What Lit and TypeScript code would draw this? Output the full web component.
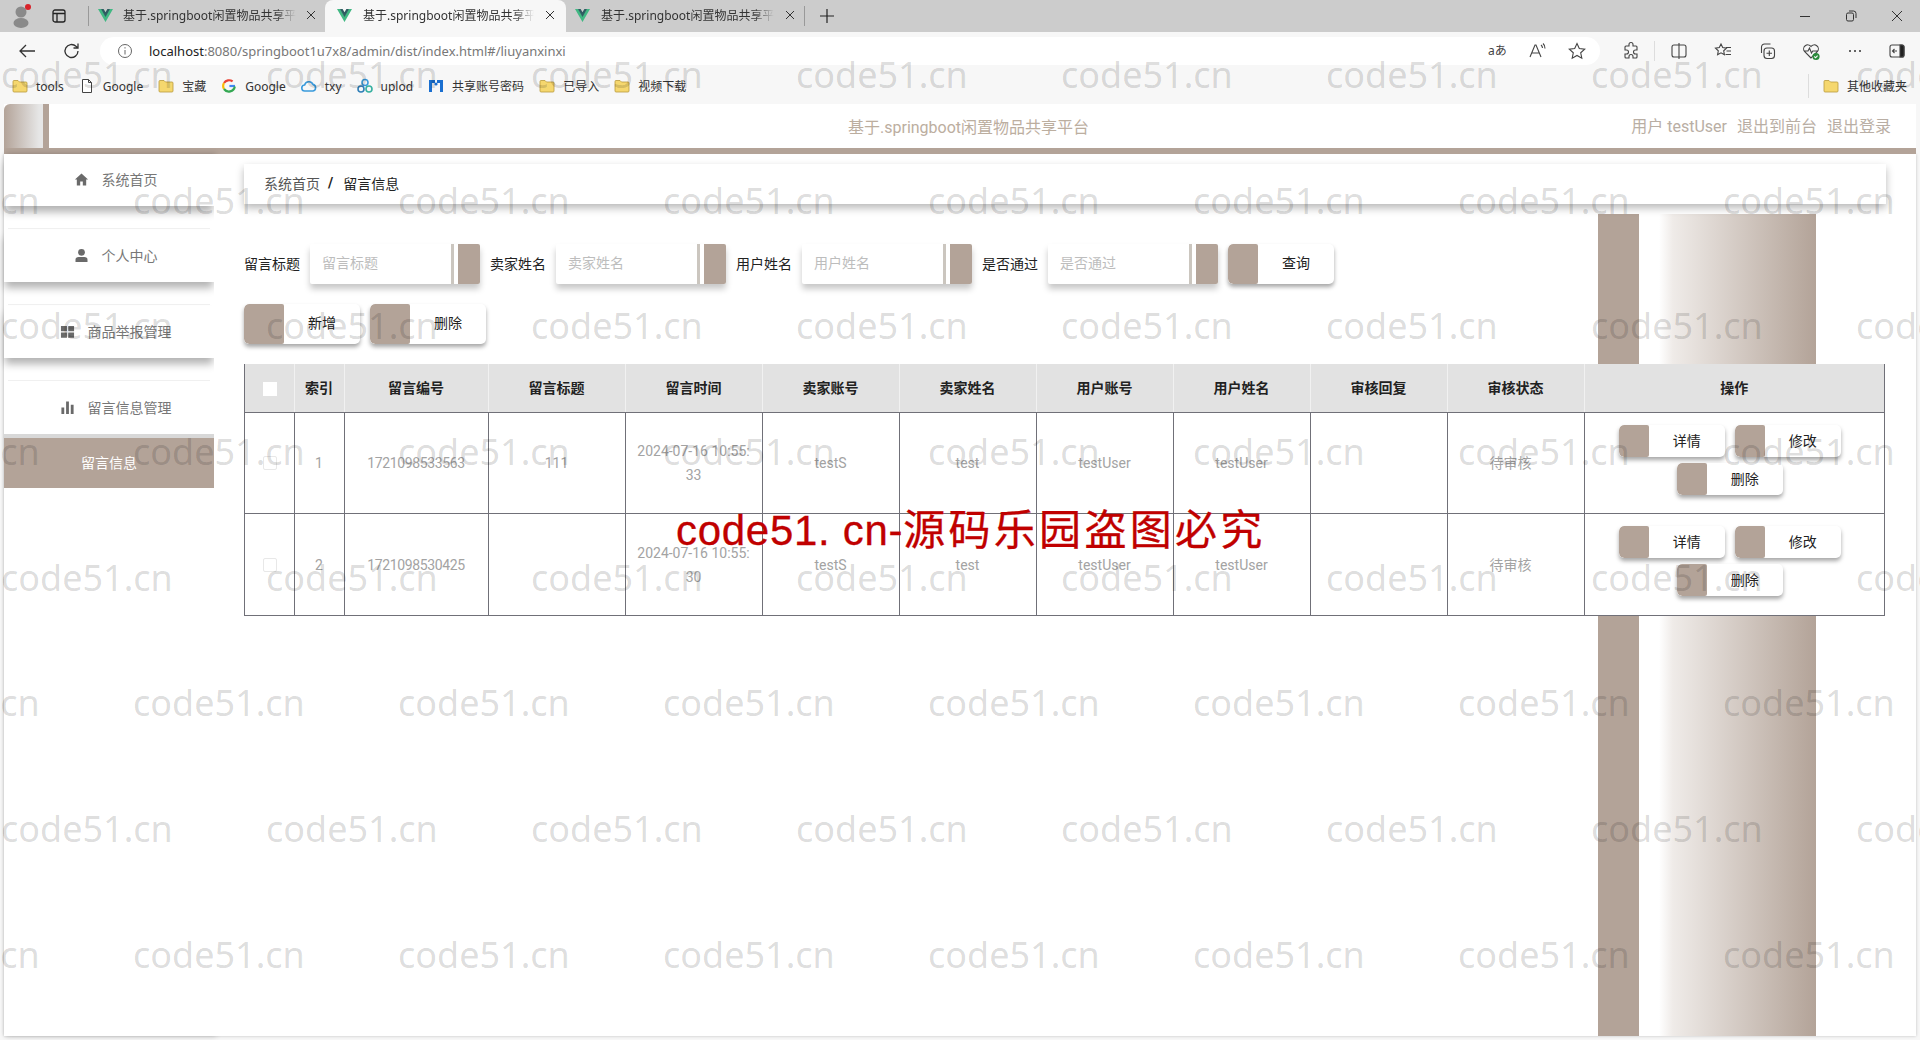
import { LitElement, html, css, svg } from "lit";
import { customElement } from "lit/decorators.js";

const vue = html`<svg class="fav" viewBox="0 0 16 16"><path fill="#41b883" d="M0 1h3.6L8 8.6 12.4 1H16L8 15z"/><path fill="#2f5d62" d="M3.2 1h2.8L8 4.6 10 1h2.8L8 9.6z"/></svg>`;
const folder = html`<svg class="bi" viewBox="0 0 16 16"><path fill="#f5d76e" stroke="#b99a3c" stroke-width=".8" d="M1 3.5q0-1 1-1h4l1.5 1.5H14q1 0 1 1V13q0 1-1 1H2q-1 0-1-1z"/></svg>`;
const doc = html`<svg class="bi" viewBox="0 0 16 16"><path fill="#fff" stroke="#444" d="M3.5 1.5h6l3 3v10h-9zM9.5 1.5v3h3"/></svg>`;
const gIcon = html`<svg class="bi" viewBox="0 0 16 16"><path fill="none" stroke="#4285f4" stroke-width="2.2" d="M14 8H8.4"/><path fill="none" stroke="#ea4335" stroke-width="2.2" d="M3 5a6 6 0 0 1 8.6-1.6"/><path fill="none" stroke="#fbbc05" stroke-width="2.2" d="M3 5a6 6 0 0 0 0 6"/><path fill="none" stroke="#34a853" stroke-width="2.2" d="M3 11a6 6 0 0 0 10.8-2.5"/></svg>`;
const cloud = html`<svg class="bi" viewBox="0 0 16 16"><path fill="none" stroke="#3a9bdc" stroke-width="1.6" d="M4 13a3 3 0 0 1-.4-6A4.5 4.5 0 0 1 12 6.4a3.4 3.4 0 0 1 0 6.6z"/></svg>`;
const cloud2 = html`<svg class="bi" viewBox="0 0 16 16"><circle cx="8" cy="4.5" r="3" fill="none" stroke="#3a9bdc" stroke-width="1.6"/><circle cx="4" cy="11" r="3" fill="none" stroke="#2f7fb8" stroke-width="1.6"/><circle cx="12" cy="11" r="3" fill="none" stroke="#36b0a0" stroke-width="1.6"/></svg>`;
const share = html`<svg class="bi" viewBox="0 0 16 16"><path fill="#1a6fd0" d="M1 2h6v3H4v9H1zM9 2h6v12h-3V5H9z"/><circle cx="8" cy="6" r="1.6" fill="#1a6fd0"/></svg>`;

const bookmarks = [
  [folder, "tools"], [doc, "Google"], [folder, "宝藏"], [gIcon, "Google"], [cloud, "txy"],
  [cloud2, "uplod"], [share, "共享账号密码"], [folder, "已导入"], [folder, "视频下载"],
] as const;

const head = ["索引", "留言编号", "留言标题", "留言时间", "卖家账号", "卖家姓名", "用户账号", "用户姓名", "审核回复", "审核状态", "操作"];
const rows = [
  ["1", "1721098533563", "111", "2024-07-16 10:55:33", "testS", "test", "testUser", "testUser", "", "待审核"],
  ["2", "1721098530425", "", "2024-07-16 10:55:30", "testS", "test", "testUser", "testUser", "", "待审核"],
];
const filters = ["留言标题", "卖家姓名", "用户姓名", "是否通过"];

const homeI = svg`<path d="M8 1.5 1 8h2v6.5h3.6V10h2.8v4.5H13V8h2z"/>`;
const userI = svg`<circle cx="8" cy="4.6" r="3.6"/><path d="M1.6 15v-2.6Q1.6 9.6 5 9.6h6q3.4 0 3.4 2.8V15z"/>`;
const gridI = svg`<path d="M1 2h6.4v5.6H1zM8.8 2H15v5.6H8.8zM1 9h6.4v5.6H1zM8.8 9H15v5.6H8.8z"/>`;
const barI = svg`<path d="M1.5 8h3v7h-3zM6.5 1.5h3V15h-3zM11.5 5h3v10h-3z"/>`;
const nav = [
  [homeI, "系统首页"], [userI, "个人中心"], [gridI, "商品举报管理"], [barI, "留言信息管理"],
] as const;

@customElement("app-root")
export class AppRoot extends LitElement {
  static styles = css`
    :host { display: block; width: 1920px; height: 1040px; position: relative; overflow: hidden; background: #f7f7f7;
      font-family: Roboto, "Noto Sans CJK SC", sans-serif; font-size: 14px; }
    * { box-sizing: border-box; }
    svg { display: block; flex: none; }

    .tabs { height: 32px; background: #cccccc; display: flex; align-items: stretch; font: 12px "Noto Sans", "Noto Sans CJK SC", sans-serif; color: #333; }
    .profile { width: 44px; flex: none; display: flex; align-items: center; justify-content: center; }
    .ws { width: 44px; flex: none; display: flex; align-items: center; justify-content: center; padding-right: 14px; padding-left: 0; }
    .sep { width: 1px; height: 20px; background: #999; align-self: center; flex: none; }
    .tabgap { width: 8px; flex: none; }
    .tab { flex: none; display: flex; align-items: center; gap: 10px; position: relative; padding-bottom: 2px; }
    .tab.first { width: 228px; padding-right: 8px; gap: 9px; }
    .tab.on { background: #f7f7f7; border-radius: 8px 8px 0 0; width: 241px; padding-left: 11px; padding-right: 10px; }
    .tab.last { width: 238px; padding-left: 8px; padding-right: 8px; }
    .tab .fav { width: 17px; height: 15px; }
    .title { flex: 1; white-space: nowrap; overflow: hidden; -webkit-mask-image: linear-gradient(to right, #000 88%, transparent); mask-image: linear-gradient(to right, #000 88%, transparent); }
    .x { width: 12px; height: 12px; flex: none; }
    .plus { width: 44px; flex: none; display: flex; align-items: center; justify-content: center; }
    .spacer { flex: 1; }
    .win { width: 46px; flex: none; display: flex; align-items: center; justify-content: center; }

    .bar { height: 38px; background: #f7f7f7; display: flex; align-items: center; }
    .nb { width: 45px; flex: none; display: flex; justify-content: center; }
    .navgroup { display: flex; padding-left: 4px; width: 100px; flex: none; }
    .url { width: 1500px; height: 28px; flex: none; background: #fff; border-radius: 14px; display: flex; align-items: center; padding: 0 3px 0 17px; font: 13px "Noto Sans", sans-serif; color: #777; }
    .url .dark { color: #222; }
    .url .addr { margin-left: 16px; flex: 1; white-space: nowrap; }
    .ti { width: 40px; flex: none; display: flex; justify-content: center; }
    .tools { display: flex; align-items: center; flex: 1; padding-left: 11px; justify-content: flex-start; }
    .ti.s { width: 44px; }
    .vs { width: 1px; height: 20px; background: #ddd; flex: none; margin: 0 2px 0 3px; }

    .books { height: 34px; background: #f7f7f7; display: flex; align-items: center; padding: 0 0 2px 12px; gap: 15px; font: 12px "Noto Sans", "Noto Sans CJK SC", sans-serif; color: #333; }
    .bk { display: flex; align-items: center; gap: 8px; white-space: nowrap; }
    .bi { width: 16px; height: 16px; }
    .other { margin-left: auto; padding: 0 13px 0 14px; border-left: 1px solid #ddd; height: 24px; }

    .app { height: 936px; display: flex; flex-direction: column; }
    .hdr { height: 50px; margin: 0 4px; flex: none; background: #fff; border-bottom: 6px solid #b3a398; display: flex; align-items: center; position: relative; font-size: 16px; color: #b9aea4; }
    .logo { height: 44px; flex: none; background: linear-gradient(to right, #b3a398, #e6e6e6 90%); border-right: 6px solid #b3a398; border-radius: 6px 0 0 0; box-sizing: content-box; width: 39px; }
    .brand { position: absolute; left: 844px; top: 10px; color: #bcae9f; }
    .who { margin-left: auto; display: flex; gap: 10px; padding: 0 25px 2px 0; }

    .body { flex: 1; display: flex; min-height: 0; margin: 0 4px 4px; background: #fff; box-shadow: 0 0 3px rgba(0,0,0,.22); }
    .side { width: 210px; flex: none; background: #fff; box-shadow: 2px 0 6px rgba(0,0,0,.2); color: #777; position: relative; }
    .mi { height: 52px; background: #fff; display: flex; align-items: center; justify-content: center; gap: 13px; padding: 0 0 2px 13px; box-shadow: 0 7px 8px -1px rgba(0,0,0,.3); position: relative; }
    .mi svg { width: 15px; height: 15px; fill: #6a6a6a; }
    .mi.last { box-shadow: none; }
    .div { height: 24px; padding-top: 22px; padding-left: 4px; padding-right: 4px; }
    .div::after { content: ""; display: block; height: 1px; background: #f0f0f0; }
    .sub { height: 54px; background: #b3a398; color: #fff; display: flex; align-items: center; justify-content: center; border-top: 4px solid #d8d8d8; padding-bottom: 2px; }
    .main { flex: 1; padding: 10px 30px; position: relative; min-width: 0;
      background-color: #fff;
      background-image: linear-gradient(to right, #b3a398 0, #b3a398 41px, #fff 41px, #fff 61px, #efebe8 75px, #b3a398 218px);
      background-size: 218px 100%; background-position: 1384px 60px; background-repeat: no-repeat; }
    .crumb { height: 40px; width: 1642px; background: #fff; box-shadow: 0 4px 8px rgba(0,0,0,.28); display: flex; align-items: center; padding: 0 0 2px 20px; color: #555; }
    .crumb i { font-style: normal; margin: 0 10px 0 8px; color: #222; font-weight: 700; }
    .crumb b { font-weight: 400; color: #222; }

    .form { display: flex; align-items: center; margin-top: 40px; height: 40px; }
    .lab { width: 56px; color: #222; margin: 0 10px 2px 0; white-space: nowrap; flex: none; }
    .sel { width: 170px; height: 40px; display: flex; flex: none; margin-right: 10px; box-shadow: 0 5px 6px rgba(0,0,0,.22); background: #fff; border-radius: 2px; }
    .sel span { flex: 1; padding-left: 12px; line-height: 38px; color: #bdbdbd; }
    .sel u { width: 3px; background: #cbc6bf; }
    .sel em { width: 4px; background: #fff; }
    .sel s { width: 22px; background: #b3a398; border-radius: 0 2px 2px 0; }

    .btn { display: inline-flex; height: 40px; background: #fff; border-radius: 5px; box-shadow: 0 3px 4px rgba(0,0,0,.35); color: #222; flex: none; overflow: hidden; }
    .btn::before { content: ""; background: #b3a398; width: 40px; flex: none; border-radius: 5px 2px 2px 5px; }
    .btn span { flex: 1; text-align: center; line-height: 38px; }
    .btn.big { width: 116px; }
    .btn.q { width: 106px; }
    .btn.q::before { width: 30px; }
    .btn.a { width: 106px; height: 32px; }
    .btn.a::before { width: 30px; }
    .btn.a span { line-height: 32px; }
    .acts { display: flex; gap: 10px; margin-top: 20px; height: 40px; }

    .table { margin-top: 20px; width: 1641px; border-bottom: 1px solid #707078; border-left: 1px solid #707078; border-right: 1px solid #707078; }
    .row { display: grid; grid-template-columns: 49.5px 50px 144px repeat(8, 137px) 1fr; }
    .row.h { height: 49px; background: #e2e2e2; font-weight: 700; color: #222; border-bottom: 1px solid #707078; }
    .row.h > div { border-right: 1px solid #f1f1f1; display: flex; align-items: center; justify-content: center; padding-bottom: 2px; }
    .row.h > div:first-child { padding: 2px 0 0 2px; }
    .row.h > div:last-child { border-right: 0; }
    .row.b { height: 101px; background: #fff; color: #a3a3a3; border-bottom: 1px solid #707078; }
    .row.b:last-child { border-bottom: 0; }
    .row.b > div { border-right: 1px solid #707078; display: flex; align-items: center; justify-content: center; text-align: center; line-height: 24px; }
    .row.b > div:first-child { padding-left: 2px; }
    .row.b > div:last-child { border-right: 0; }
    .row.b > div.state { padding-right: 10px; }
    .tight { letter-spacing: -.38px; }
    .row.b > div.date { padding: 0 10px; word-break: break-all; }
    .cb { width: 14px; height: 14px; background: #fff; border: 1px solid #e8e8e8; border-radius: 2px; }
    .h .cb { border: 0; border-radius: 0; }
    .row.b > div.ops { flex-wrap: wrap; align-content: flex-start; gap: 6px 10px; padding: 12px 9px 0 0; }

    .marks { position: absolute; inset: 0; pointer-events: none; padding-top: 12px; display: flex; flex-direction: column; font: 36px "Noto Sans", sans-serif; color: rgba(0,0,0,.15); line-height: 126px; z-index: 5; overflow: hidden; }
    .mrow { height: 125.7px; display: flex; flex: none; }
    .mrow.odd { margin-left: -133px; }
    .mrow span { width: 265px; flex: none; padding-left: 1px; }
    .stamp { position: absolute; left: 676px; top: 506px; height: 50px; display: flex; align-items: center; color: #c00000; font: 42px/50px "Liberation Sans", "Noto Sans CJK SC", sans-serif; z-index: 6; white-space: nowrap; pointer-events: none; -webkit-text-stroke: .3px #c00000; }
    .stamp .l { letter-spacing: .7px; }
    .stamp .c { letter-spacing: 3.3px; }
  `;

  private tab(cls: string) {
    return html`<div class="tab ${cls}">${vue}<div class="title">基于.springboot闲置物品共享平台</div>
      <svg class="x" viewBox="0 0 12 12"><path stroke="#333" d="M2 2l8 8M10 2l-8 8"/></svg></div>`;
  }

  private tool(c: unknown, cls = "") {
    return html`<div class="ti ${cls}"><svg width="20" height="20" viewBox="0 0 20 20" fill="none" stroke="#444" stroke-width="1.1">${c}</svg></div>`;
  }

  render() {
    return html`
      <div class="tabs">
        <div class="profile"><svg width="24" height="28" viewBox="0 0 24 28"><circle cx="11" cy="10" r="5.5" fill="#8a8a8a"/><ellipse cx="11" cy="21" rx="7.5" ry="5" fill="#8a8a8a"/><circle cx="18" cy="5" r="3" fill="#d8232a"/></svg></div>
        <div class="ws"><svg width="16" height="16" viewBox="0 0 16 16" fill="none" stroke="#222" stroke-width="1.3"><rect x="2" y="2" width="12" height="12" rx="2"/><path d="M2 5.5h12M6 5.5V14" /></svg></div>
        <div class="sep"></div>
        <div class="tabgap"></div>
        ${this.tab("first")}${this.tab("on")}${this.tab("last")}
        <div class="sep"></div>
        <div class="plus"><svg width="14" height="14" viewBox="0 0 14 14"><path stroke="#222" stroke-width="1.2" d="M7 0v14M0 7h14"/></svg></div>
        <div class="spacer"></div>
        <div class="win"><svg width="12" height="12" viewBox="0 0 12 12"><path stroke="#333" d="M1 6.5h10"/></svg></div>
        <div class="win"><svg width="12" height="12" viewBox="0 0 12 12" fill="none" stroke="#333"><rect x="1.5" y="3" width="7" height="8" rx="1.5"/><path d="M4 1h4.5Q11 1 11 3.5V8"/></svg></div>
        <div class="win"><svg width="12" height="12" viewBox="0 0 12 12"><path stroke="#333" d="M1 1l10 10M11 1L1 11"/></svg></div>
      </div>
      <div class="bar">
        <div class="navgroup">
          <div class="nb"><svg width="18" height="18" viewBox="0 0 18 18" fill="none" stroke="#333" stroke-width="1.3"><path d="M17 9H2M8 3L2 9l6 6"/></svg></div>
          <div class="nb"><svg width="18" height="18" viewBox="0 0 18 18" fill="none" stroke="#333" stroke-width="1.3"><path d="M15 9a6.5 6.5 0 1 1-2-4.7L15 6M15 1.5V6h-4.5"/></svg></div>
        </div>
        <div class="url">
          <svg width="16" height="16" viewBox="0 0 16 16" fill="none" stroke="#666"><circle cx="8" cy="8" r="6.5"/><path d="M8 7v4.5M8 4.2v1.3"/></svg>
          <div class="addr"><span class="dark">localhost</span>:8080/springboot1u7x8/admin/dist/index.html#/liuyanxinxi</div>
          ${this.toolsInUrl()}
        </div>
        <div class="tools">
          ${this.tool(svg`<path d="M8 3.5a2 2 0 0 1 4 0V5h3a1 1 0 0 1 1 1v3h-1.5a2 2 0 0 0 0 4H16v3a1 1 0 0 1-1 1h-3v-1.5a2 2 0 0 0-4 0V17H5a1 1 0 0 1-1-1v-3h1.5a2 2 0 0 0 0-4H4V6a1 1 0 0 1 1-1h3z"/>`)}
          <div class="vs"></div>
          ${this.tool(svg`<rect x="3" y="4" width="14" height="12" rx="2"/><path d="M10 2v16"/>`, "s")}
          ${this.tool(svg`<path d="M8 3l1.7 3.6 3.8.5-2.8 2.7.7 3.9L8 11.8l-3.4 1.9.7-3.9L2.5 7.1l3.8-.5zM13 6.5h5M13.5 10H18M12.5 13.5H18"/>`, "s")}
          ${this.tool(svg`<rect x="7" y="7" width="10.5" height="10.5" rx="3"/><path d="M12.3 9.5v5.5M9.5 12.3H15M4.5 12V6a3 3 0 0 1 3-3h6"/>`, "s")}
          ${this.tool(svg`<path d="M10 17 3.5 10.5a4 4 0 0 1 6.5-5 4 4 0 0 1 6.5 5zM3 10h4l1.5-3 2 5 1.2-2H17"/><circle cx="15" cy="15.5" r="3.6" fill="#2a8a3a" stroke="none"/><path stroke="#fff" d="M13.3 15.5l1.3 1.3 2-2.2"/>`, "s")}
          ${this.tool(svg`<circle cx="5" cy="10" r="1" fill="#333" stroke="none"/><circle cx="10" cy="10" r="1" fill="#333" stroke="none"/><circle cx="15" cy="10" r="1" fill="#333" stroke="none"/>`, "s")}
          ${this.tool(svg`<rect x="3" y="4" width="14" height="12" rx="2"/><path d="M13 4h2a2 2 0 0 1 2 2v8a2 2 0 0 1-2 2h-2z" fill="#222"/><path d="M10 10H5.5M7.5 8l-2 2 2 2"/>`)}
        </div>
      </div>
      <div class="books">
        ${bookmarks.map(([i, t]) => html`<div class="bk">${i}<span>${t}</span></div>`)}
        <div class="bk other">${folder}<span>其他收藏夹</span></div>
      </div>
      <div class="app">
        <div class="hdr">
          <div class="logo"></div>
          <div class="brand">基于.springboot闲置物品共享平台</div>
          <div class="who"><span>用户 testUser</span><span>退出到前台</span><span>退出登录</span></div>
        </div>
        <div class="body">
          <aside class="side">
            ${nav.map(([i, t], n) => html`
              ${n ? html`<div class="div"></div>` : ""}
              <div class="mi ${n === 3 ? "last" : ""}"><svg viewBox="0 0 16 16">${i}</svg><span>${t}</span></div>`)}
            <div class="sub">留言信息</div>
          </aside>
          <main class="main">
            <div class="crumb"><span>系统首页</span><i>/</i><b>留言信息</b></div>
            <div class="form">
              ${filters.map((f) => html`<div class="lab">${f}</div>
                <div class="sel"><span>${f}</span><u></u><em></em><s></s></div>`)}
              <div class="btn q"><span>查询</span></div>
            </div>
            <div class="acts">
              <div class="btn big"><span>新增</span></div>
              <div class="btn big"><span>删除</span></div>
            </div>
            <div class="table">
              <div class="row h"><div><div class="cb"></div></div>${head.map((h) => html`<div>${h}</div>`)}</div>
              ${rows.map((r) => html`<div class="row b">
                <div><div class="cb"></div></div>
                ${r.map((c, i) => html`<div class="${i === 1 ? "tight" : i === 3 ? "date" : i === 9 ? "state" : ""}">${c}</div>`)}
                <div class="ops">
                  <div class="btn a"><span>详情</span></div>
                  <div class="btn a"><span>修改</span></div>
                  <div class="btn a"><span>删除</span></div>
                </div>
              </div>`)}
            </div>
          </main>
        </div>
      </div>
      <div class="marks">
        ${[0, 1, 2, 3, 4, 5, 6, 7].map((r) => html`<div class="mrow ${r % 2 ? "odd" : ""}">
          ${Array.from({ length: 9 }, () => html`<span>code51.cn</span>`)}
        </div>`)}
      </div>
      <div class="stamp"><span class="l">code51. cn-</span><span class="c">源码乐园盗图必究</span></div>
    `;
  }

  private toolsInUrl() {
    return html`
      ${this.tool(svg`<text x="1" y="14" font-size="12" fill="#444" stroke="none" font-family="Noto Sans, Noto Sans CJK JP">aあ</text>`)}
      ${this.tool(svg`<path d="M3 16 8 4h1l5 12M5 12h7M14 4a4 4 0 0 1 1.5 3M16 2.5a6 6 0 0 1 2 5"/>`)}
      ${this.tool(svg`<path d="M10 2.5l2.3 5 5.4.6-4 3.7 1.1 5.4L10 14.4l-4.8 2.8 1.1-5.4-4-3.7 5.4-.6z"/>`)}
    `;
  }
}
